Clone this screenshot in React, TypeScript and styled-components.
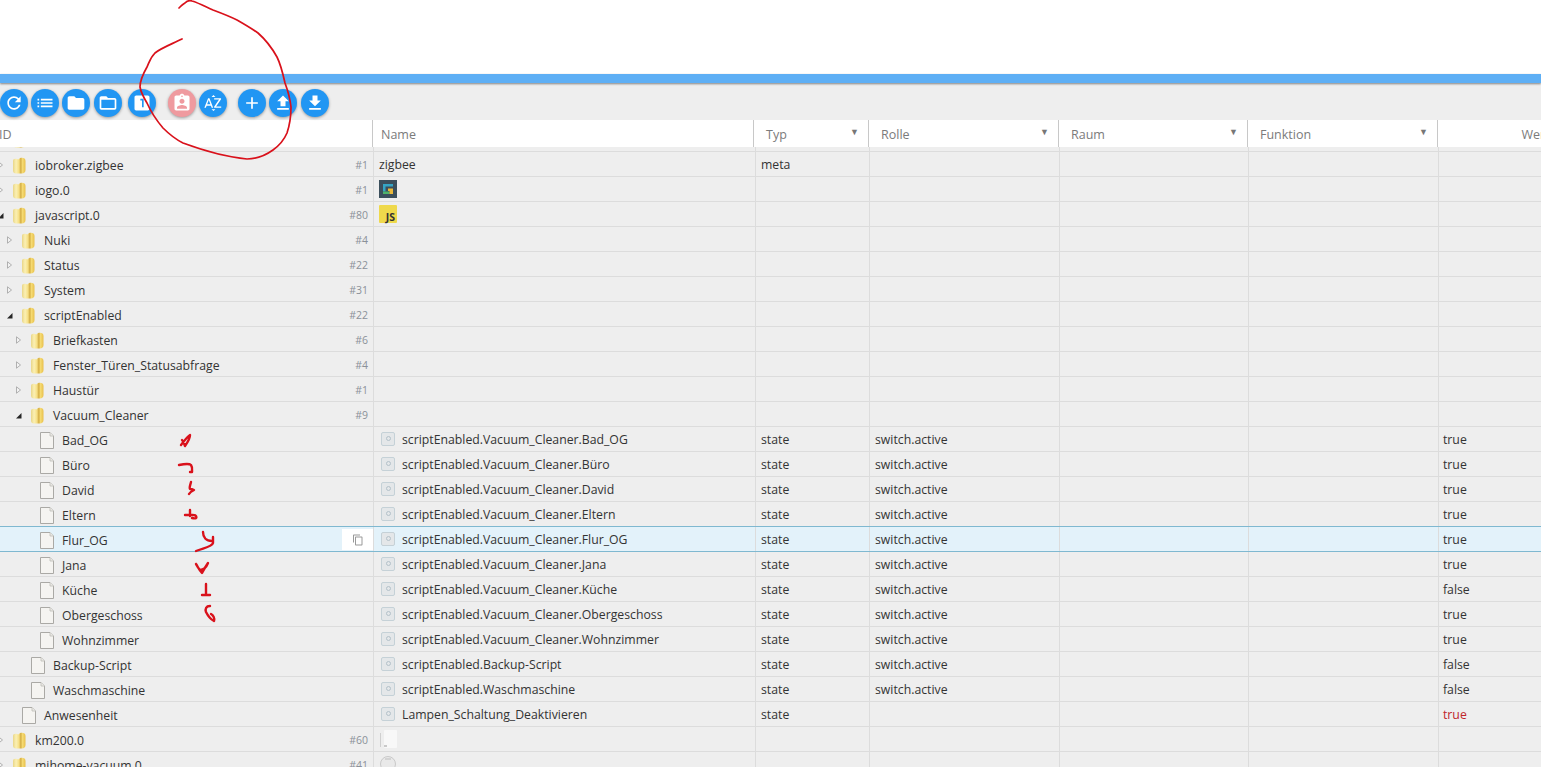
import React from "react";
import styled, { createGlobalStyle } from "styled-components";

const Global = createGlobalStyle`
  html, body { margin: 0; padding: 0; background: #fff; }
  body { width: 1541px; height: 767px; overflow: hidden; font-family: "Open Sans", "Liberation Sans", sans-serif; }
`;

const Page = styled.div`
  position: relative;
  width: 1541px;
  height: 767px;
  overflow: hidden;
  background: #eee;
`;
const TopArea = styled.div`
  height: 74px;
  background: #fff;
`;
const BlueBar = styled.div`
  height: 8.5px;
  background: #5eaff5;
  box-shadow: 0 1px 2px rgba(0, 0, 0, 0.45);
  position: relative;
`;
const Toolbar = styled.div`
  height: 37.5px;
  box-sizing: border-box;
  padding: 6px 0 0;
  display: flex;
  align-items: flex-start;
  background: #eee;
`;
const RoundButton = styled.div<{ $gap?: number; $pink?: boolean }>`
  width: 28px;
  height: 28px;
  margin-left: ${(p) => p.$gap ?? 3}px;
  border-radius: 50%;
  background: ${(p) => (p.$pink ? "#ef9a9f" : "#2196f3")};
  box-shadow: 0 1px 3px rgba(0, 0, 0, 0.35);
  display: flex;
  align-items: center;
  justify-content: center;
  flex: none;
  svg {
    display: block;
    fill: #fff;
  }
`;
const HeaderRow = styled.div`
  display: grid;
  grid-template-columns: 372px 381px 115px 190px 189px 190px 196px;
  height: 27px;
  background: #fff;
  width: 1633px;
`;
const HeaderCell = styled.div<{ $center?: boolean; $pad: number; $line?: boolean }>`
  position: relative;
  box-sizing: border-box;
  height: 27px;
  padding: 6px 0 0 ${(p) => p.$pad}px;
  margin-left: ${(p) => (p.$line ? 0 : -1)}px;
  border-left: ${(p) => (p.$line ? 1 : 0)}px solid #c8c8c8;
  font-size: 12.5px;
  line-height: 18px;
  color: #7b7b7b;
  text-align: ${(p) => (p.$center ? "center" : "left")};
`;
const SortMark = styled.span`
  position: absolute;
  right: 9px;
  top: 6px;
  font-size: 9px;
  line-height: 11px;
  color: #777;
`;
const Sliver = styled.div`
  display: grid;
  grid-template-columns: 373px 382px 114px 190px 189px 190px 196px;
  height: 5px;
  overflow: hidden;
  box-sizing: border-box;
  border-bottom: 1px solid #dcdcdc;
  width: 1634px;
`;
const SliverCell = styled.div`
  height: 5px;
  border-left: 1px solid #dcdcdc;
  &:first-child {
    border-left: 0;
    padding-left: 12px;
  }
  svg {
    display: block;
    margin-top: -16px;
  }
`;
const Row = styled.div<{ $active?: boolean }>`
  position: relative;
  display: grid;
  grid-template-columns: 373px 382px 114px 190px 189px 190px 196px;
  box-sizing: border-box;
  width: 1634px;
  height: ${(p) => (p.$active ? 26 : 25)}px;
  margin-top: ${(p) => (p.$active ? -1 : 0)}px;
  background: ${(p) => (p.$active ? "#e3f2fa" : "#eee")};
  border-bottom: 1px solid ${(p) => (p.$active ? "#7fb8d0" : "#dcdcdc")};
  border-top: ${(p) => (p.$active ? "1px solid #7fb8d0" : "0")};
`;
const TreeCell = styled.div`
  position: relative;
  display: flex;
  align-items: center;
  box-sizing: border-box;
  min-width: 0;
  padding-top: 2px;
  font-size: 12.25px;
  color: #333;
`;
const Cell = styled.div<{ $danger?: boolean; $pad?: number }>`
  display: flex;
  align-items: center;
  box-sizing: border-box;
  min-width: 0;
  border-left: 1px solid #dcdcdc;
  padding: 0 0 0 ${(p) => p.$pad ?? 5}px;
  font-size: 12.25px;
  color: ${(p) => (p.$danger ? "#c0262b" : "#333")};
  white-space: nowrap;
`;
const Toggle = styled.span<{ $level: number }>`
  display: block;
  flex: none;
  width: 5px;
  height: 8px;
  margin-left: ${(p) => p.$level * 9 - 2}px;
  margin-right: 9px;
  svg {
    display: block;
  }
`;
const LeafIcon = styled.span<{ $level: number }>`
  display: block;
  flex: none;
  margin-left: ${(p) => p.$level * 9 + 13}px;
  svg {
    display: block;
  }
`;
const Label = styled.span<{ $leaf?: boolean }>`
  margin-left: ${(p) => (p.$leaf ? 8 : 9)}px;
  white-space: nowrap;
`;
const Count = styled.span`
  margin-left: auto;
  padding-right: 5px;
  font-size: 10.5px;
  color: #8b9199;
`;
const CopyBox = styled.div`
  position: absolute;
  right: 0;
  top: 2px;
  width: 31px;
  height: 21px;
  background: #fff;
  display: flex;
  align-items: center;
  justify-content: center;
  svg {
    display: block;
    fill: #999;
  }
`;
const StateBox = styled.span`
  flex: none;
  box-sizing: border-box;
  width: 14px;
  height: 14px;
  margin: 0 7px 1px 2px;
  border-radius: 2px;
  border: 1.5px solid #c5d1d7;
  background: #e4e7e9;
  display: flex;
  align-items: center;
  justify-content: center;
  &::after {
    content: "";
    width: 3px;
    height: 3px;
    border-radius: 50%;
    border: 1px solid #b3c1c9;
  }
`;
const JsBadge = styled.span`
  flex: none;
  box-sizing: border-box;
  width: 18px;
  height: 18px;
  background: #efd94c;
  border-radius: 1px;
  display: flex;
  align-items: flex-end;
  justify-content: flex-end;
  padding: 0 2px 0 0;
  font-size: 10.5px;
  line-height: 12px;
  font-weight: 700;
  color: #333;
`;
const LogoSvg = styled.svg`
  flex: none;
  display: block;
`;
const Sketch = styled.svg`
  position: absolute;
  left: 0;
  top: 0;
  width: 1541px;
  height: 767px;
  pointer-events: none;
  fill: none;
  stroke: #d9111b;
  stroke-linecap: round;
  stroke-linejoin: round;
`;

const M = {
  refresh: "M17.65 6.35C16.2 4.9 14.21 4 12 4c-4.42 0-7.99 3.58-7.99 8s3.57 8 7.99 8c3.73 0 6.84-2.55 7.73-6h-2.08c-.82 2.33-3.04 4-5.65 4-3.31 0-6-2.69-6-6s2.69-6 6-6c1.66 0 3.14.69 4.22 1.78L13 11h7V4l-2.35 2.35z",
  list: "M3 13h2v-2H3v2zm0 4h2v-2H3v2zm0-8h2V7H3v2zm4 4h14v-2H7v2zm0 4h14v-2H7v2zM7 7v2h14V7H7z",
  folder: "M10 4H4c-1.1 0-1.99.9-1.99 2L2 18c0 1.1.9 2 2 2h16c1.1 0 2-.9 2-2V8c0-1.1-.9-2-2-2h-8l-2-2z",
  folderOpen: "M20 6h-8l-2-2H4c-1.1 0-1.99.9-1.99 2L2 18c0 1.1.9 2 2 2h16c1.1 0 2-.9 2-2V8c0-1.1-.9-2-2-2zm0 12H4V8h16v10z",
  one: "M19 3H5c-1.1 0-2 .9-2 2v14c0 1.1.9 2 2 2h14c1.1 0 2-.9 2-2V5c0-1.1-.9-2-2-2zm-5 14h-2V9h-2V7h4v10z",
  ind: "M19 3h-4.18C14.4 1.84 13.3 1 12 1c-1.3 0-2.4.84-2.82 2H5c-1.1 0-2 .9-2 2v14c0 1.1.9 2 2 2h14c1.1 0 2-.9 2-2V5c0-1.1-.9-2-2-2zm-7 0c.55 0 1 .45 1 1s-.45 1-1 1-1-.45-1-1 .45-1 1-1zm0 4c1.66 0 3 1.34 3 3s-1.34 3-3 3-3-1.34-3-3 1.34-3 3-3zm6 12H6v-1.4c0-2 4-3.1 6-3.1s6 1.1 6 3.1V19z",
  az: "M14.94 4.66h-4.72l2.36-2.36zm-4.69 14.71h4.66l-2.33 2.33zM6.1 6.27L1.6 17.73h1.84l.92-2.45h5.11l.92 2.45h1.84L7.74 6.27H6.1zm-1.13 7.37l1.94-5.18 1.94 5.18H4.97zm10.76 2.5h6.12v1.59h-8.53v-1.29l5.92-8.56h-5.88v-1.6h8.3v1.26l-5.93 8.6z",
  add: "M19 13h-6v6h-2v-6H5v-2h6V5h2v6h6v2z",
  up: "M9 16h6v-6h4l-7-7-7 7h4zm-4 2h14v2H5z",
  down: "M19 9h-4V3H9v6H5l7 7 7-7zM5 18v2h14v-2H5z",
  copy: "M16 1H4c-1.1 0-2 .9-2 2v14h2V3h12V1zm3 4H8c-1.1 0-2 .9-2 2v14c0 1.1.9 2 2 2h11c1.1 0 2-.9 2-2V7c0-1.1-.9-2-2-2zm0 16H8V7h11v14z",
};

const buttons: { d: string; gap: number; pink?: boolean }[] = [
  { d: M.refresh, gap: 0 },
  { d: M.list, gap: 3 },
  { d: M.folder, gap: 3 },
  { d: M.folderOpen, gap: 3.5 },
  { d: M.one, gap: 6.5 },
  { d: M.ind, gap: 11.5, pink: true },
  { d: M.az, gap: 3.5 },
  { d: M.add, gap: 11 },
  { d: M.up, gap: 3 },
  { d: M.down, gap: 4 },
];

const FolderIcon = () => (
  <svg width="14" height="17" viewBox="0 0 14 17">
    <defs>
      <linearGradient id="fg" x1="0" x2="1" y1="0" y2="0">
        <stop offset="0" stopColor="#e9d688" />
        <stop offset="0.25" stopColor="#fbf0b4" />
        <stop offset="0.48" stopColor="#f6df84" />
        <stop offset="0.62" stopColor="#d4ae45" />
        <stop offset="0.76" stopColor="#f5da72" />
        <stop offset="1" stopColor="#e8c04c" />
      </linearGradient>
    </defs>
    <path d="M1 4C1 2.6 2 1.8 3.2 1.8 4.6 1.8 5.6 2 6.4 2.6 7.2 1.4 8.4 .8 9.8 .8c2.4 0 3.7 1.2 3.7 3.2v9c0 2.2-1.3 3.4-3.7 3.4H4c-2 0-3-1.2-3-3z" fill="url(#fg)" />
  </svg>
);

const FileIcon = () => (
  <svg width="14" height="17" viewBox="0 0 14 17">
    <path d="M.5.5h9.5l3.5 3.5v12.5H.5z" fill="#f5f4f1" stroke="#aaa9a5" />
    <path d="M10 .5V4h3.5" fill="#eceae5" stroke="#bdbcb8" strokeWidth=".8" />
  </svg>
);

const ArrowClosed = () => (
  <svg width="5" height="8" viewBox="0 0 5 8">
    <path d="M.5.8 4.5 4 .5 7.2z" fill="#f3f3f3" stroke="#a0a0a0" strokeWidth=".8" />
  </svg>
);
const ArrowOpen = () => (
  <svg width="6" height="8" viewBox="0 0 6 8">
    <path d="M5.5 2v5.5H0z" fill="#262626" />
  </svg>
);

const IogoIcon = () => (
  <LogoSvg width="18" height="18" viewBox="0 0 18 18">
    <rect width="18" height="18" fill="#3c4f5c" />
    <path d="M4 4h10v2.5H6.5v5H4z" fill="#35a5c4" />
    <path d="M4 11.5h6.5V14H4z" fill="#4fb36b" />
    <path d="M9 8.5h5V14h-3.5v-3H9z" fill="#eab93a" />
  </LogoSvg>
);
const KmIcon = () => (
  <LogoSvg width="18" height="18" viewBox="0 0 18 18">
    <rect x="5" y="0" width="13" height="18" rx="1" fill="#f8f8f8" />
    <path d="M1.5 3v14" stroke="#cfcfcf" />
    <path d="M5 16h3" stroke="#9a9a9a" />
  </LogoSvg>
);
const RoundIcon = () => (
  <LogoSvg width="18" height="18" viewBox="0 0 18 18">
    <circle cx="9" cy="9" r="7.5" fill="#e9e9e9" stroke="#c9c9c9" />
    <path d="M6 4h6" stroke="#bdbdbd" />
  </LogoSvg>
);

type RowData = {
  level: number;
  id: string;
  kind: "open" | "closed" | "leaf";
  count?: string;
  name?: string;
  logo?: "iogo" | "js" | "km" | "round";
  state?: boolean;
  typ?: string;
  rolle?: string;
  wert?: string;
  danger?: boolean;
  active?: boolean;
};

const V = "scriptEnabled.Vacuum_Cleaner.";
const leaf = (id: string, wert: string, active?: boolean): RowData => ({
  level: 3, id, kind: "leaf", name: V + id, state: true, typ: "state", rolle: "switch.active", wert, active,
});

const rows: RowData[] = [
  { level: 0, id: "iobroker.zigbee", kind: "closed", count: "#1", name: "zigbee", typ: "meta" },
  { level: 0, id: "iogo.0", kind: "closed", count: "#1", logo: "iogo" },
  { level: 0, id: "javascript.0", kind: "open", count: "#80", logo: "js" },
  { level: 1, id: "Nuki", kind: "closed", count: "#4" },
  { level: 1, id: "Status", kind: "closed", count: "#22" },
  { level: 1, id: "System", kind: "closed", count: "#31" },
  { level: 1, id: "scriptEnabled", kind: "open", count: "#22" },
  { level: 2, id: "Briefkasten", kind: "closed", count: "#6" },
  { level: 2, id: "Fenster_Türen_Statusabfrage", kind: "closed", count: "#4" },
  { level: 2, id: "Haustür", kind: "closed", count: "#1" },
  { level: 2, id: "Vacuum_Cleaner", kind: "open", count: "#9" },
  leaf("Bad_OG", "true"),
  leaf("Büro", "true"),
  leaf("David", "true"),
  leaf("Eltern", "true"),
  leaf("Flur_OG", "true", true),
  leaf("Jana", "true"),
  leaf("Küche", "false"),
  leaf("Obergeschoss", "true"),
  leaf("Wohnzimmer", "true"),
  { level: 2, id: "Backup-Script", kind: "leaf", name: "scriptEnabled.Backup-Script", state: true, typ: "state", rolle: "switch.active", wert: "false" },
  { level: 2, id: "Waschmaschine", kind: "leaf", name: "scriptEnabled.Waschmaschine", state: true, typ: "state", rolle: "switch.active", wert: "false" },
  { level: 1, id: "Anwesenheit", kind: "leaf", name: "Lampen_Schaltung_Deaktivieren", state: true, typ: "state", wert: "true", danger: true },
  { level: 0, id: "km200.0", kind: "closed", count: "#60", logo: "km" },
  { level: 0, id: "mihome-vacuum.0", kind: "closed", count: "#41", logo: "round" },
];

const headers = ["Typ", "Rolle", "Raum", "Funktion"];

const Logo = ({ logo }: { logo: RowData["logo"] }) => {
  if (logo === "iogo") return <IogoIcon />;
  if (logo === "js") return <JsBadge>JS</JsBadge>;
  if (logo === "km") return <KmIcon />;
  if (logo === "round") return <RoundIcon />;
  return null;
};

export default function App() {
  return (
    <Page>
      <Global />
      <TopArea />
      <BlueBar />
      <Toolbar>
        {buttons.map((b) => (
          <RoundButton key={b.d} $gap={b.gap} $pink={b.pink}>
            <svg width="20" height="20" viewBox="0 0 24 24">
              <path d={b.d} />
            </svg>
          </RoundButton>
        ))}
      </Toolbar>
      <HeaderRow>
        <HeaderCell $pad={0}>ID</HeaderCell>
        <HeaderCell $pad={8} $line>Name</HeaderCell>
        {headers.map((h) => (
          <HeaderCell key={h} $pad={12} $line>
            {h}
            <SortMark>▼</SortMark>
          </HeaderCell>
        ))}
        <HeaderCell $pad={0} $line $center>Wert</HeaderCell>
      </HeaderRow>
      <Sliver>
        <SliverCell>
          <FolderIcon />
        </SliverCell>
        <SliverCell />
        <SliverCell />
        <SliverCell />
        <SliverCell />
        <SliverCell />
        <SliverCell />
      </Sliver>
      {rows.map((r) => (
        <Row key={r.id} $active={r.active}>
          <TreeCell>
            {r.kind === "leaf" ? (
              <LeafIcon $level={r.level}>
                <FileIcon />
              </LeafIcon>
            ) : (
              <>
                <Toggle $level={r.level}>{r.kind === "open" ? <ArrowOpen /> : <ArrowClosed />}</Toggle>
                <FolderIcon />
              </>
            )}
            <Label $leaf={r.kind === "leaf"}>{r.id}</Label>
            {r.count && <Count>{r.count}</Count>}
            {r.active && (
              <CopyBox>
                <svg width="12" height="12" viewBox="0 0 24 24">
                  <path d={M.copy} />
                </svg>
              </CopyBox>
            )}
          </TreeCell>
          <Cell>
            {r.state && <StateBox />}
            {r.logo && <Logo logo={r.logo} />}
            {r.name}
          </Cell>
          <Cell>{r.typ}</Cell>
          <Cell>{r.rolle}</Cell>
          <Cell />
          <Cell />
          <Cell $danger={r.danger} $pad={4}>{r.wert}</Cell>
        </Row>
      ))}
      <Sketch viewBox="0 0 1541 767">
        <path strokeWidth="1.7" d="M182 39C172 44 161 48 155 53C150 58 149 63 147 67C143 74 140 80 140 87C141 93 144 98 147 103C151 112 157 121 163 128C169 134 175 139 183 143C202 150 225 157 247 159C258 159 266 155 273 150C280 145 284 140 287 133C290 124 291 115 291 107C290 98 288 91 285 83C283 74 281 65 277 57C272 48 266 40 258 33C251 28 244 24 237 20C229 16 221 13 213 10C206 7 199 3 192 1C189 0 187 1 185 3C183 4 181 6 179 8" />
        <g strokeWidth="2.4">
          <path d="M181 445C184 441 188 436 190 435C190 439 187 443 185 446C184 443 183 441 182 440" />
          <path d="M179 465C184 464 189 463 191 465C193 468 192 471 192 472H190" />
          <path d="M191 482C190 486 189 488 190 489C192 489 194 490 194 490C192 491 190 492 189 494" />
          <path d="M190 510V516M185 515C190 515 194 514 196 516C197 518 196 519 192 518" />
          <path d="M203 532C203 537 206 541 212 541" />
          <path d="M213 537V543C212 547 203 548 196 551" />
          <path d="M196 564C198 567 199 570 202 573C204 569 206 566 208 563C206 568 204 570 200 570C198 568 197 566 196 564" />
          <path d="M206 584V595M202 595H210" />
          <path d="M210 606C206 606 205 609 206 612C208 616 210 619 214 621C215 618 213 615 211 614" />
        </g>
      </Sketch>
    </Page>
  );
}
